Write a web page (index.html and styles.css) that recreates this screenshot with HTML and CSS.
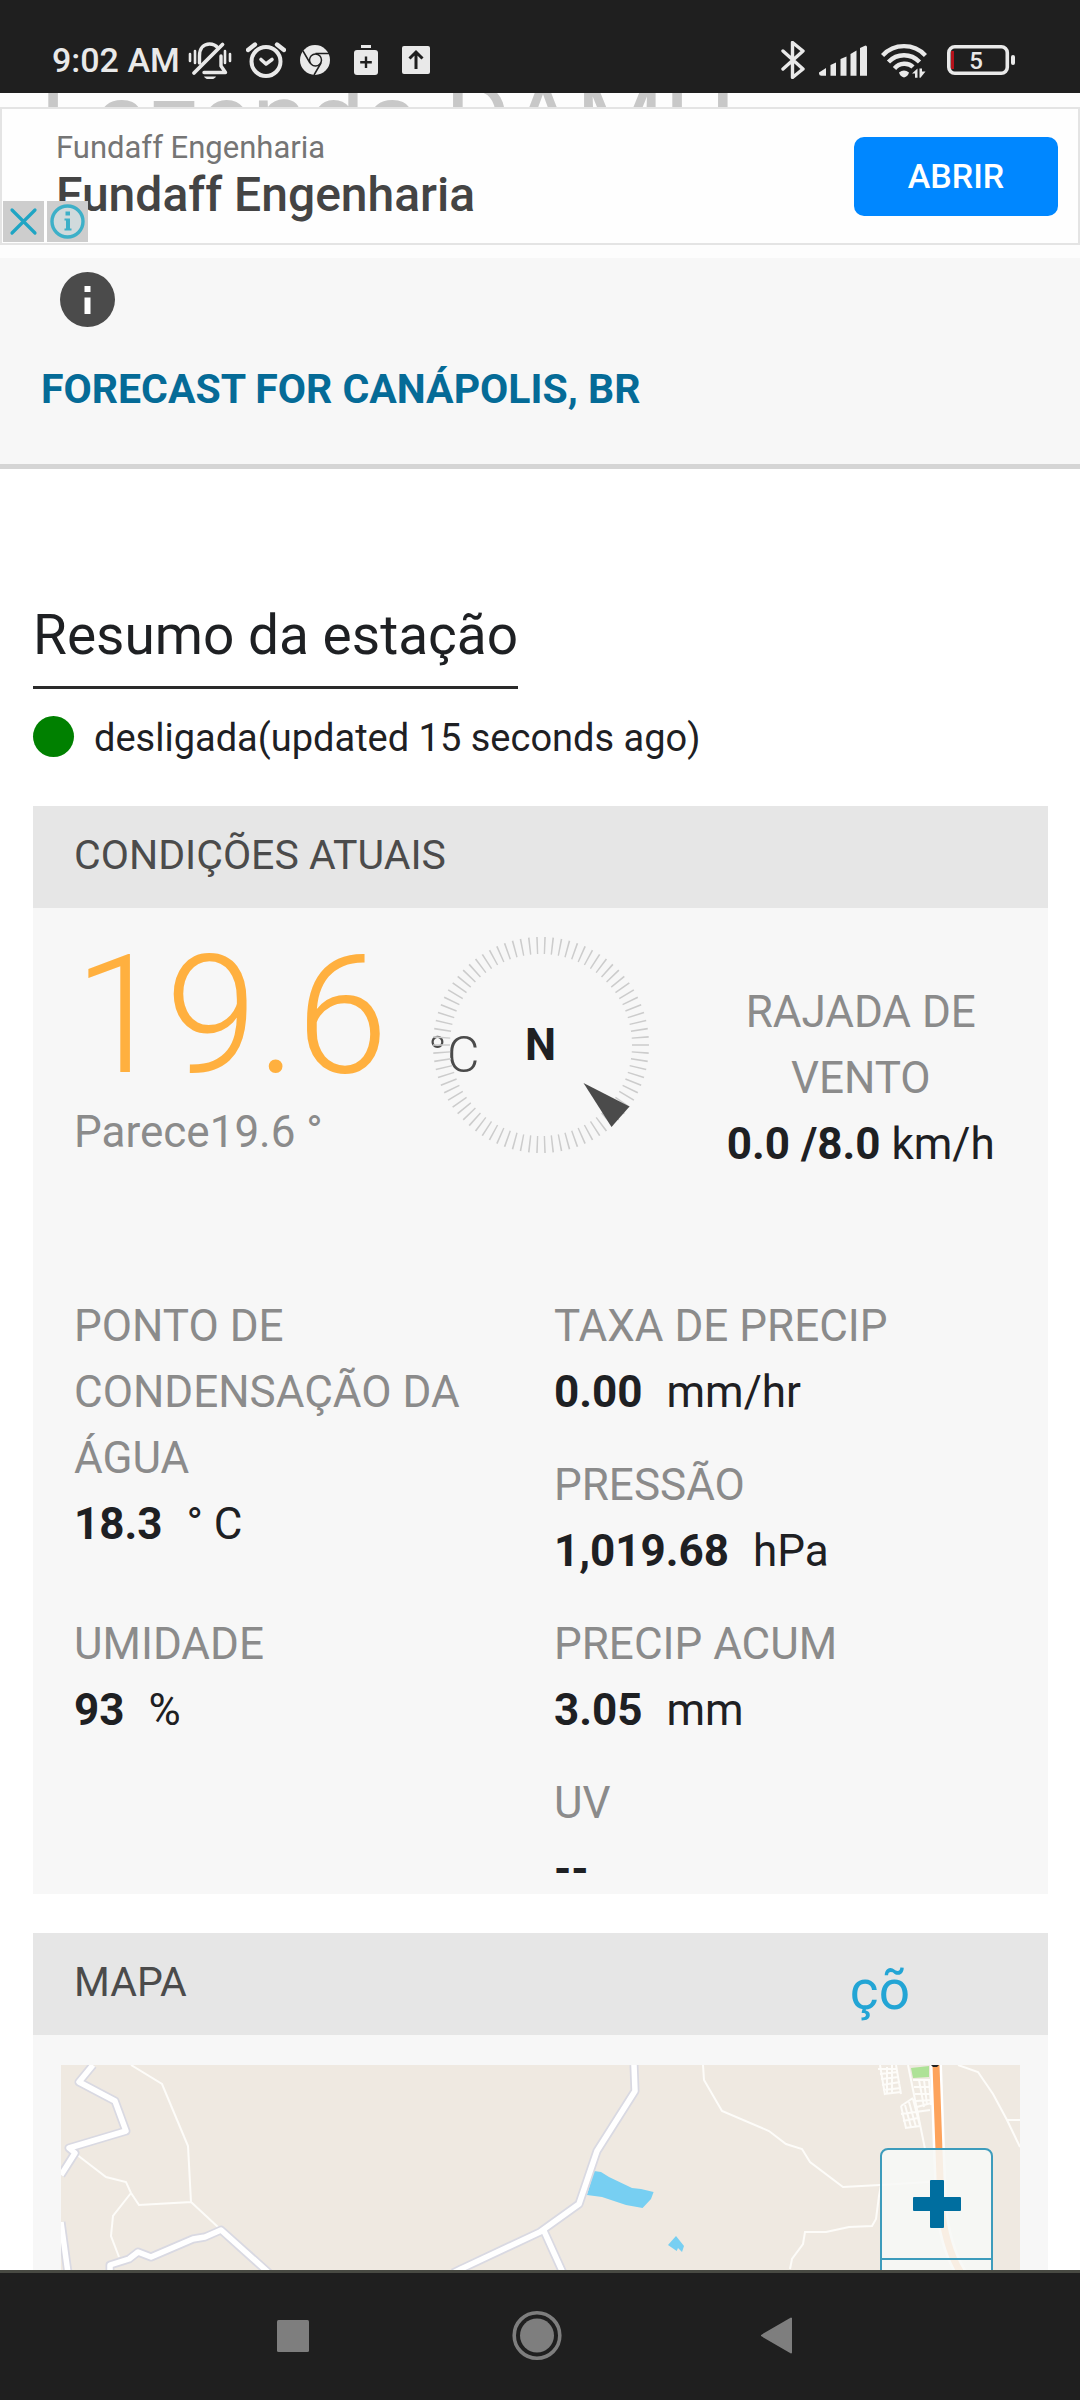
FILE: index.html
```html
<!DOCTYPE html>
<html lang="pt-BR">
<head>
<meta charset="utf-8">
<meta name="viewport" content="width=device-width, initial-scale=1">
<title>Fazenda DAMH</title>
<link rel="stylesheet" href="styles.css">
</head>
<body>
<div class="status-bar">
  <div class="status-left">
    <span class="clock">9:02 AM</span>
    <svg class="ic" width="44" height="38" viewBox="0 0 44 38">
      <g fill="none" stroke="#e9e9e9" stroke-width="3.4" stroke-linecap="round" stroke-linejoin="round">
        <path d="M11.500 22V15C11.500 7 16 3 21.500 3C25 3 28 4.500 30 7"/>
        <path d="M16 31.500H37.500L33 25V15"/>
        <path d="M34.500 3.500L6 32" stroke-width="3.800"/>
        <path d="M2 13v7M7 10v12M37 10v12M42 13v7" stroke-width="2.600"/>
      </g>
      <path d="M16 35.500h12c-1.500 2.500-3.500 3-6 3s-4.500-.5-6-3z" fill="#e9e9e9"/>
    </svg>
    <svg class="ic gap-a" width="40" height="38" viewBox="0 0 40 38">
      <g fill="none" stroke="#e9e9e9" stroke-linecap="round" stroke-linejoin="round">
        <circle cx="20" cy="20.500" r="14.500" stroke-width="4"/>
        <path d="M2 9L9 3.500M38 9L31 3.500" stroke-width="4.400"/>
        <path d="M15 18.500L20 23L26 18.500" stroke-width="3.600"/>
      </g>
    </svg>
    <svg class="ic gap-a" width="30" height="38" viewBox="0 0 30 38">
      <circle cx="15" cy="19" r="15" fill="#e9e9e9"/>
      <g fill="none" stroke="#1f1f1f" stroke-width="1.500">
        <circle cx="15.500" cy="19" r="6"/>
        <path d="M15.500 12.600H29M10 22L3 10M21 22L14 34"/>
      </g>
    </svg>
    <svg class="ic gap-b" width="24" height="38" viewBox="0 0 24 38">
      <path d="M7 4h10v3H7z" fill="#e9e9e9"/>
      <rect y="9" width="24" height="25" rx="3" fill="#e9e9e9"/>
      <path d="M12 15.500v11.500M6.200 21.200h11.600" stroke="#1f1f1f" stroke-width="2.400"/>
    </svg>
    <svg class="ic gap-b" width="28" height="38" viewBox="0 0 28 38">
      <rect y="5" width="28" height="28" rx="2" fill="#e9e9e9"/>
      <path d="M14 28V11.500M7.500 17.500L14 11L20.500 17.500" fill="none" stroke="#1f1f1f" stroke-width="3"/>
    </svg>
  </div>
  <div class="status-right">
    <svg class="ic" width="24" height="38" viewBox="0 0 24 38">
      <path d="M2 10L22 28L11.500 36.500V1.500L22 10L2 28" fill="none" stroke="#e9e9e9" stroke-width="3.400" stroke-linecap="round" stroke-linejoin="round"/>
    </svg>
    <svg class="ic gap-a" width="48" height="38" viewBox="0 0 48 38">
      <path d="M0 31.500L7 27V34.800H2.500Q0 34.800 0 32.500ZM11.500 24L17 21.500V34.800H11.500ZM21.500 18L27.500 15.500V34.800H21.500ZM31.500 13L37.500 9.500V34.800H31.500ZM41 7L46.500 4.500Q48 4.500 48 6V34.800H41Z" fill="#e9e9e9"/>
    </svg>
    <svg class="ic gap-a" width="46" height="38" viewBox="0 0 46 38">
      <g fill="none" stroke="#e9e9e9" stroke-width="4.400">
        <path d="M1.500 14.500C13 2 33 2 44.500 14.500"/>
        <path d="M7.500 21C16 12 30 12 38.500 21"/>
        <path d="M13.500 27.500C18.500 21.500 27.500 21.500 32 26"/>
      </g>
      <path d="M18 31.500Q23 27.500 28 31.500Q27 35.500 23 36.500Q19 35.500 18 31.500Z" fill="#e9e9e9"/>
      <path d="M31 32.500L36.500 27.500V36.800H34V32.500ZM38.500 27.500H41V30.500H44.500L39.500 36.800H38.500Z" fill="#e9e9e9"/>
    </svg>
    <svg class="ic gap-c" width="68" height="38" viewBox="0 0 68 38">
      <rect x="1.800" y="5.800" width="58.500" height="26.500" rx="6" fill="none" stroke="#e9e9e9" stroke-width="3.600"/>
      <rect x="4" y="10" width="3" height="18" fill="#b5121b"/>
      <rect x="64" y="14" width="4" height="10" rx="2" fill="#e9e9e9"/>
      <text class="battery-level" x="29" y="28">5</text>
    </svg>
  </div>
</div>

<main class="page">
  <div class="station-title"><h1>Fazenda DAMH</h1></div>

  <aside class="ad">
    <div class="ad-text">
      <span class="ad-source">Fundaff Engenharia</span>
      <span class="ad-title">Fundaff Engenharia</span>
    </div>
    <button class="ad-button" type="button">ABRIR</button>
    <div class="ad-badges">
      <button type="button" aria-label="Fechar">
        <svg width="41" height="41" viewBox="0 0 41 41"><path d="M9 9L32 32M32 9L9 32" stroke="#1fa5c4" stroke-width="3.200" stroke-linecap="round"/></svg>
      </button>
      <button type="button" aria-label="Informações">
        <svg width="41" height="41" viewBox="0 0 41 41"><circle cx="20.500" cy="20.500" r="15.500" fill="#d0dadc" stroke="#3db0c8" stroke-width="3.400"/><path d="M18.500 10.500h4.500v4h-4.500zM17.500 17.500h5.500v10h1.500v2h-7v-2h1.500v-8h-1.500z" fill="#3db0c8"/></svg>
      </button>
    </div>
  </aside>

  <header class="forecast">
    <svg class="info" width="55" height="55" viewBox="0 0 55 55"><circle cx="27.500" cy="27.500" r="27.500" fill="#4b4b4b"/><path d="M24.500 14h6v6h-6zM24.500 25.500h6v16.500h-6z" fill="#fff"/></svg>
    <a href="#">FORECAST FOR CANÁPOLIS, BR</a>
  </header>

  <div class="content">
    <h2>Resumo da estação</h2>
    <p class="station-status"><span class="dot"></span>desligada(updated 15 seconds ago)</p>

    <section class="card">
      <div class="card-head"><h3>CONDIÇÕES ATUAIS</h3></div>
      <div class="current">
        <div class="temp">
          <div class="temp-row"><span class="temp-value">19.6</span><span class="temp-unit">°C</span></div>
          <div class="feels">Parece19.6 °</div>
        </div>
        <div class="compass">
          <svg width="216" height="216" viewBox="0 0 216 216">
            <circle cx="108" cy="108" r="99.500" fill="none" stroke="#cccccc" stroke-width="17" pathLength="820" stroke-dasharray="2 8" stroke-dashoffset="1"/>
            <path d="M150.500 146L196.500 169.500L178.500 190Z" fill="#4b4b4b"/>
          </svg>
          <span>N</span>
        </div>
        <div class="gust">
          <div class="label">RAJADA DE VENTO</div>
          <div><b>0.0 /8.0</b> km/h</div>
        </div>
      </div>
      <dl class="readings">
        <div class="tall"><dt>PONTO DE CONDENSAÇÃO DA ÁGUA</dt><dd><b>18.3</b><span class="unit">° C</span></dd></div>
        <div><dt>TAXA DE PRECIP</dt><dd><b>0.00</b><span class="unit">mm/hr</span></dd></div>
        <div><dt>PRESSÃO</dt><dd><b>1,019.68</b><span class="unit">hPa</span></dd></div>
        <div><dt>UMIDADE</dt><dd><b>93</b><span class="unit">%</span></dd></div>
        <div><dt>PRECIP ACUM</dt><dd><b>3.05</b><span class="unit">mm</span></dd></div>
        <div class="second"><dt>UV</dt><dd><b>--</b></dd></div>
      </dl>
    </section>

    <section class="card">
      <div class="card-head"><h3>MAPA</h3><a class="map-link" href="#">çõ</a></div>
      <div class="map-wrap">
        <div class="map">
          <svg class="map-art" viewBox="0 0 959 420" preserveAspectRatio="xMidYMin slice">
            <rect width="959" height="420" fill="#efe9e1"/>
            <path d="M533 106L540 107L548 112L571 123L580 124L592.600 127L590 134L581.600 143L565 140L541 132L526 130ZM615 171L623 181L621 187L617 183L615.700 186L607 180Z" fill="#77cff2"/>
            <g fill="none" stroke="#fdfcf9" stroke-width="2">
              <path d="M70 0L101 19L127 81L130 137L78 140L70 128L65 117L45 112L15 89M70 128L52 151L50 171L58 192M130 137L158 163"/>
              <path d="M642 0L643 15L661 46L708 66L725 79L741 84L749 97L782 122L819 120L868 117"/>
              <path d="M729 204L731 194L742 179L744 167L765 167L788 162L811 161L815 154L818 131L820 120"/>
              <path d="M897 0L917 7L932 29L946 55L959 82M946 55H959"/>
              <path d="M847 0L864 84"/>
              <path d="M819 0L824 30M835 0L840 29M817 4H836M819 9L837 7M820 14L838 12M821 20L839 17M822 25L840 23M823 29L840 27M826 2V29M831 0V28"/>
              <path d="M852 15H869M853 22H869M854 29H870M855 36L870 35M858 15L863 42M863 15L866 40M868 15L870 40M856 42L870 38"/>
              <path d="M840 41L852 33M840 49L869 45M842 56L857 53M844 63L859 61M840 41L845 63M844 40L850 62M848 37L855 62M852 34L859 61"/>
            </g>
            <g fill="none" stroke-linejoin="round">
              <path d="M32 0L18 17L54 36L65 66L8 83L14 88L0 110M49 210V200L68 194L77 187L90 192L132 174L144 172L160 165L208 208M392 208L400 204L479 167L518 139L536 86L574 26L573 0M483 166L502 208M0 157L7 208" stroke="#d9d9e2" stroke-width="9"/>
              <path d="M32 0L18 17L54 36L65 66L8 83L14 88L0 110M49 210V200L68 194L77 187L90 192L132 174L144 172L160 165L208 208M392 208L400 204L479 167L518 139L536 86L574 26L573 0M483 166L502 208M0 157L7 208" stroke="#fff" stroke-width="5.500"/>
              <path d="M875 0L878 86L880 140Q884 182 900 208" stroke="#fff" stroke-width="12"/>
              <path d="M875 0L878 86L880 140Q884 182 900 208" stroke="#fda35c" stroke-width="7"/>
            </g>
            <path d="M850 3L868 1V12L852 13Z" fill="#aee297"/>
            <path d="M870 0H878L876 2H872Z" fill="#222"/>
          </svg>
          <div class="zoom">
            <button type="button" aria-label="Aumentar zoom"><svg width="48" height="48" viewBox="0 0 48 48"><path d="M18 0h12a1 1 0 0 1 1 1v16h16a1 1 0 0 1 1 1v12a1 1 0 0 1-1 1H31v16a1 1 0 0 1-1 1H18a1 1 0 0 1-1-1V31H1a1 1 0 0 1-1-1V18a1 1 0 0 1 1-1h16V1a1 1 0 0 1 1-1z" fill="#006e9f"/></svg></button>
            <button type="button" aria-label="Diminuir zoom"><svg width="48" height="48" viewBox="0 0 48 48"><rect y="17" width="48" height="14" rx="1" fill="#006e9f"/></svg></button>
          </div>
        </div>
      </div>
    </section>
  </div>
</main>

<nav class="nav-bar">
  <button type="button" aria-label="Recentes"><svg width="60" height="60" viewBox="0 0 60 60"><rect x="13" y="13" width="32" height="32" rx="1.500" fill="#7e7e7e"/></svg></button>
  <button type="button" aria-label="Início"><svg width="60" height="60" viewBox="0 0 60 60"><circle cx="30" cy="28.500" r="22.800" fill="none" stroke="#7e7e7e" stroke-width="3.600"/><circle cx="30" cy="28.500" r="17" fill="#7e7e7e"/></svg></button>
  <button type="button" aria-label="Voltar"><svg width="60" height="60" viewBox="0 0 60 60"><path d="M41 11.500V45.500L12 28.500Z" fill="#7e7e7e" stroke="#7e7e7e" stroke-width="2" stroke-linejoin="round"/></svg></button>
</nav>
</body>
</html>
```
FILE: styles.css
```css
* {
  box-sizing: border-box;
}

body {
  margin: 0;
  height: 100vh;
  display: flex;
  flex-direction: column;
  background: #fff;
  color: #1e2023;
  font-family: Roboto, "Liberation Sans", sans-serif;
}

h1, h2, h3, p, dl, dd {
  margin: 0;
  font-weight: 400;
}

button {
  padding: 0;
  border: 0;
  background: none;
  font: inherit;
}

a {
  text-decoration: none;
}

svg {
  display: block;
}

/* System status bar */
.status-bar {
  flex: none;
  display: flex;
  justify-content: space-between;
  padding: 41px 65px 14px 52px;
  background: #1f1f1f;
}

.status-left,
.status-right {
  display: flex;
  align-items: center;
}

.clock {
  margin-right: 8px;
  color: #e9e9e9;
  font-size: 34px;
  font-weight: 500;
  line-height: 38px;
}

.ic {
  flex: none;
}

.gap-a {
  margin-left: 14px;
}

.gap-b {
  margin-left: 24px;
}

.gap-c {
  margin-left: 20px;
}

.battery-level {
  fill: #e9e9e9;
  font-size: 24px;
  font-weight: 500;
  text-anchor: middle;
}

/* Scrolled page */
.page {
  position: relative;
  flex: 1;
  min-height: 0;
  overflow: hidden;
}

.station-title {
  height: 165px;
  overflow: hidden;
  background: #fdfdfd;
}

.station-title h1 {
  margin: -23px 0 0 40px;
  color: #c8c8c8;
  font-size: 101px;
  line-height: 100px;
  white-space: nowrap;
}

/* Ad banner pinned over the page top */
.ad {
  position: absolute;
  top: 14px;
  left: 0;
  right: 0;
  display: flex;
  align-items: center;
  justify-content: space-between;
  height: 138px;
  padding: 0 20px 0 54px;
  border: 2px solid #e4e4e4;
  background: #fefefe;
}

.ad-text {
  display: flex;
  flex-direction: column;
  gap: 2px;
}

.ad-source {
  color: #757575;
  font-size: 31px;
  line-height: 36px;
}

.ad-title {
  color: #444;
  font-size: 48px;
  font-weight: 500;
  line-height: 54px;
}

.ad-button {
  width: 204px;
  height: 79px;
  border-radius: 10px;
  background: #0087ff;
  color: #fff;
  font-size: 34px;
  font-weight: 500;
}

.ad-badges {
  position: absolute;
  left: 1px;
  bottom: 1px;
  display: flex;
  gap: 3px;
}

.ad-badges button {
  background: #cdcdcd;
}

/* Forecast header */
.forecast {
  padding: 14px 41px 51px;
  border-bottom: 5px solid #d5d5d5;
  background: #f7f7f7;
}

.info {
  margin: 0 0 38px 19px;
}

.forecast a {
  display: block;
  color: #056b97;
  font-size: 41px;
  font-weight: 700;
  line-height: 48px;
}

.content {
  padding: 134px 32px 0 33px;
}

h2 {
  width: fit-content;
  padding-bottom: 19px;
  border-bottom: 3px solid #2a2a2a;
  font-size: 55px;
  line-height: 64px;
}

.station-status {
  display: flex;
  align-items: center;
  gap: 20px;
  margin: 27px 0 46px;
  font-size: 38px;
  line-height: 44px;
}

.dot {
  width: 41px;
  height: 41px;
  margin-bottom: 3px;
  border-radius: 50%;
  background: #008000;
}

/* Cards */
.card {
  margin-bottom: 39px;
  background: #f7f7f7;
}

.card-head {
  display: flex;
  align-items: center;
  justify-content: space-between;
  height: 102px;
  padding: 0 138px 4px 41px;
  background: #e6e6e6;
}

.card-head h3 {
  color: #4b4b4b;
  font-size: 41px;
  line-height: 48px;
}

.map-link {
  padding-top: 16px;
  color: #23a5d5;
  font-size: 55px;
  line-height: 64px;
}

/* Current conditions */
.current {
  display: grid;
  grid-template-columns: 1fr 216px 1fr;
  height: 385px;
  font-size: 44px;
  line-height: 66px;
}

.temp {
  min-width: 0;
  padding: 25px 0 0 41px;
  white-space: nowrap;
}

.temp-row {
  display: flex;
  align-items: baseline;
  gap: 40px;
}

.temp-value {
  color: #ffb03f;
  font-size: 165px;
  font-weight: 300;
  line-height: 166px;
}

.temp-unit {
  color: #4b4b4b;
  font-size: 50px;
  font-weight: 300;
  line-height: 50px;
}

.feels,
.label,
dt {
  color: #8b8b8b;
}

.compass {
  position: relative;
  padding-top: 29px;
}

.compass span {
  position: absolute;
  top: 104px;
  left: 0;
  right: 0;
  text-align: center;
  font-weight: 700;
}

.gust {
  padding: 71px 27px 0 52px;
  text-align: center;
}

.readings {
  display: grid;
  grid-template-columns: 1fr 1fr;
  grid-auto-rows: 132px;
  row-gap: 27px;
  height: 601px;
  padding: 0 14px 0 41px;
  font-size: 44px;
  line-height: 66px;
}

.unit {
  margin-left: 24px;
}

.tall {
  grid-row: span 2;
  padding-right: 40px;
}

.second {
  grid-column: 2;
}

/* Map */
.map-wrap {
  padding: 30px 28px;
}

.map {
  position: relative;
  height: 420px;
}

.map-art {
  width: 100%;
  height: 100%;
}

.zoom {
  position: absolute;
  top: 83px;
  right: 27px;
  display: flex;
  flex-direction: column;
  width: 113px;
  border: 2px solid #3d9cbc;
  border-radius: 8px;
  background: rgba(247, 248, 246, 0.88);
}

.zoom button {
  display: grid;
  place-items: center;
  height: 108px;
}

.zoom button + button {
  border-top: 2px solid #3d9cbc;
}

/* System navigation bar */
.nav-bar {
  flex: none;
  display: flex;
  align-items: center;
  justify-content: center;
  gap: 183px;
  height: 130px;
  padding-right: 6px;
  border-top: 3px solid #484a43;
  background: #1f1f1f;
}
```
